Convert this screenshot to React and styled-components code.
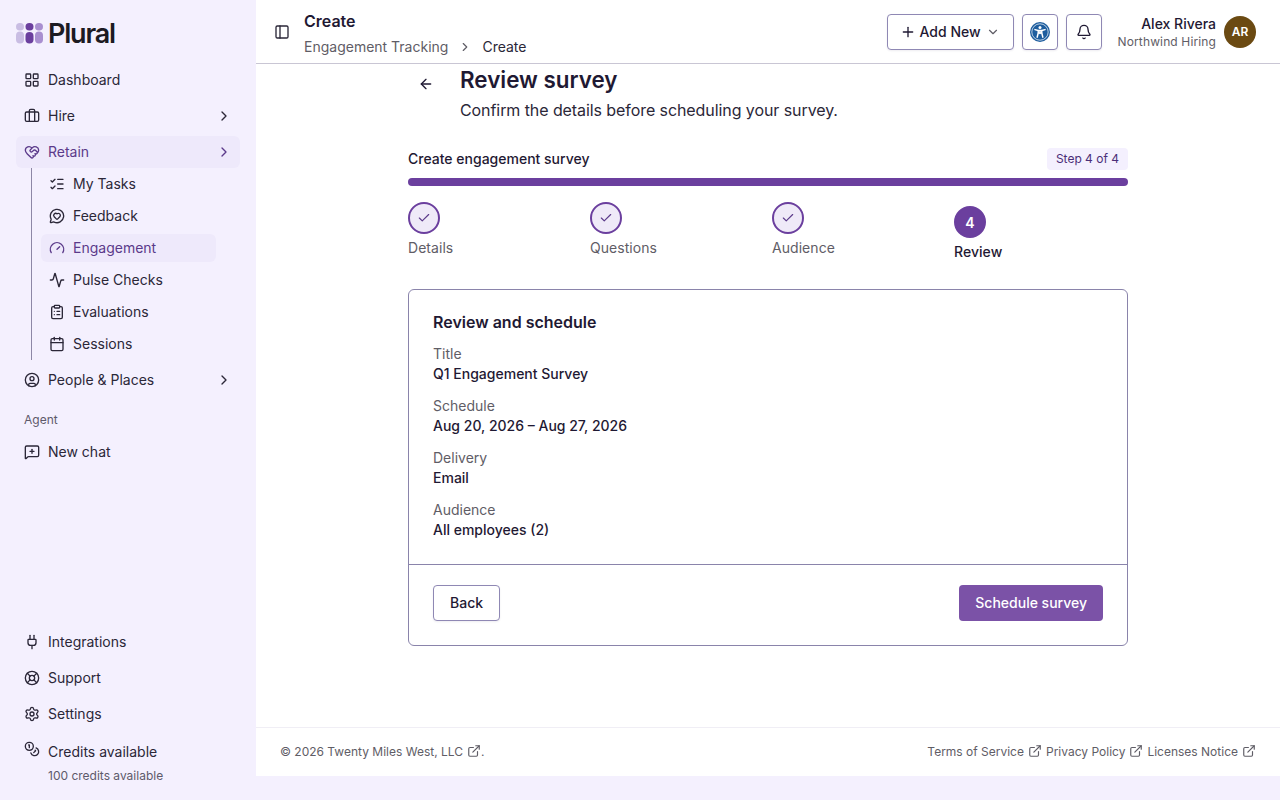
import React from "react";
import styled, { createGlobalStyle } from "styled-components";
import {
  Activity, ArrowLeft, Bell, Briefcase, Calendar, Check, ChevronDown, ChevronRight,
  CircleUser, ClipboardList, Coins, ExternalLink, Gauge, HeartHandshake, LayoutGrid,
  LifeBuoy, ListChecks, MessageCircleHeart, MessageSquarePlus, PanelLeft, Plug, Plus, Settings,
} from "lucide-react";

const GlobalStyle = createGlobalStyle`
  html, body { margin: 0; height: 100%; overflow: hidden; background: #f4f0fe; }
  body { font-family: Inter, "Liberation Sans", sans-serif; color: #1f1933; }
  * { box-sizing: border-box; }
`;

const Shell = styled.div`
  display: grid;
  grid-template-columns: 256px 1fr;
  height: 800px;
`;

const Sidebar = styled.aside`
  display: flex;
  flex-direction: column;
  padding: 0 16px;
  height: 800px;
`;

const LogoRow = styled.div`
  display: flex;
  align-items: center;
  gap: 5px;
  height: 64px;
  padding-top: 2px;
`;

const LogoText = styled.span`
  font-size: 27px;
  font-weight: 600;
  letter-spacing: -1.2px;
  color: #1c1a22;
`;

const NavList = styled.nav`
  display: flex;
  flex-direction: column;
  gap: 4px;
`;

const NavItem = styled.div`
  display: flex;
  align-items: center;
  gap: 8px;
  height: 32px;
  padding: 0 8px;
  border-radius: 6px;
  font-size: 14px;
  line-height: 20px;
  color: ${(p) => (p.$active ? "#5b3a8a" : "#2b2738")};
  background: ${(p) => (p.$active ? "#eee9fb" : "transparent")};
  svg { flex-shrink: 0; }
`;

const NavLabel = styled.span`
  flex: 1;
`;

const SubList = styled.div`
  display: flex;
  flex-direction: column;
  gap: 4px;
  margin-left: 15px;
  padding: 2px 0 2px 9px;
  border-left: 1px solid #8d87a6;
`;

const SubItem = styled(NavItem)`
  height: 28px;
  width: 175px;
`;

const SectionLabel = styled.div`
  font-size: 12px;
  line-height: 16px;
  color: #5e5a6b;
  padding: 16px 8px 8px;
`;

const SidebarBottom = styled.div`
  margin-top: auto;
  padding-bottom: 16px;
`;

const Credits = styled.div`
  padding: 11px 8px 0;
`;

const CreditsTitle = styled.div`
  display: flex;
  align-items: center;
  gap: 8px;
  height: 20px;
  font-size: 14px;
  color: #2b2738;
  svg { margin-top: -5px; }
`;

const CreditsNote = styled.div`
  font-size: 12px;
  line-height: 16px;
  margin: 7px 0 0 24px;
  color: #5e5a6b;
`;

const Main = styled.div`
  display: flex;
  flex-direction: column;
  height: 776px;
  background: #fff;
  overflow: hidden;
`;

const Header = styled.header`
  display: flex;
  align-items: center;
  flex-shrink: 0;
  height: 64px;
  padding: 0 24px 0 18px;
  border-bottom: 1px solid #c9c6d4;
`;

const PanelButton = styled.div`
  display: flex;
  margin-right: 14px;
  color: #2b2738;
`;

const HeaderTitles = styled.div`
  flex: 1;
  display: flex;
  flex-direction: column;
  gap: 6px;
  padding-top: 5px;
`;

const PageName = styled.div`
  font-size: 16px;
  line-height: 20px;
  font-weight: 600;
  color: #1f1933;
`;

const Crumbs = styled.div`
  display: flex;
  align-items: center;
  gap: 10px;
  font-size: 14px;
  line-height: 20px;
  color: #5f5d66;
  svg { color: #5f5d66; }
`;

const CrumbCurrent = styled.span`
  color: #2b2738;
`;

const OutlineButton = styled.button`
  display: flex;
  align-items: center;
  justify-content: center;
  gap: 4px;
  height: 36px;
  padding: ${(p) => (p.$square ? "0" : "0 14px 0 12px")};
  width: ${(p) => (p.$square ? "36px" : "auto")};
  margin-left: ${(p) => (p.$square ? "8px" : "0")};
  background: #fff;
  border: 1px solid #8f88b4;
  border-radius: 4px;
  box-shadow: 0 1px 2px rgba(40, 30, 80, 0.08);
  font: 500 14px Inter, "Liberation Sans", sans-serif;
  color: #1f1933;
`;

const AddButton = styled(OutlineButton)`
  width: 127px;
  padding: 0 13px 0 12px;
  justify-content: flex-start;
`;

const MutedChevron = styled(ChevronDown)`
  margin-left: auto;
  color: #5f5d66;
`;

const UserBlock = styled.div`
  display: flex;
  flex-direction: column;
  align-items: flex-end;
  margin-left: 16px;
`;

const UserName = styled.div`
  font-size: 14px;
  line-height: 20px;
  font-weight: 500;
  color: #1f1933;
`;

const UserOrg = styled.div`
  font-size: 12px;
  line-height: 16px;
  letter-spacing: 0.13px;
  color: #5f5d66;
`;

const Avatar = styled.div`
  display: flex;
  align-items: center;
  justify-content: center;
  width: 32px;
  height: 32px;
  margin-left: 8px;
  border-radius: 50%;
  background: #6b4a12;
  color: #fff;
  font-size: 12px;
  font-weight: 600;
`;

const Content = styled.main`
  flex: 1;
  width: 720px;
  margin: 0 auto;
  overflow: hidden;
`;

const TitleRow = styled.div`
  display: flex;
  align-items: flex-start;
  height: 84px;
`;

const BackArrow = styled.div`
  display: flex;
  justify-content: center;
  width: 36px;
  margin: 12px 16px 0 0;
  color: #1f1933;
`;

const Title = styled.h1`
  margin: 2px 0 0;
  font-size: 22.4px;
  line-height: 28px;
  font-weight: 600;
  color: #1f1933;
`;

const Subtitle = styled.p`
  margin: 4px 0 0;
  font-size: 16px;
  line-height: 24px;
  letter-spacing: -0.08px;
  color: #2b2738;
`;

const ProgressHead = styled.div`
  display: flex;
  align-items: center;
  justify-content: space-between;
  height: 22px;
`;

const ProgressLabel = styled.div`
  margin-top: -2px;
  font-size: 14px;
  font-weight: 500;
  color: #1f1933;
`;

const StepBadge = styled.div`
  padding: 0 9px;
  height: 22px;
  line-height: 22px;
  border-radius: 4px;
  background: #f4f0fe;
  font-size: 12px;
  color: #4b2f78;
`;

const ProgressBar = styled.div`
  height: 8px;
  margin-top: 8px;
  border-radius: 4px;
  background: #6b3f9e;
`;

const Steps = styled.div`
  display: grid;
  grid-template-columns: repeat(4, 1fr);
  gap: 8px;
  margin-top: 16px;
  height: 87px;
`;

const Step = styled.div`
  padding-top: ${(p) => (p.$current ? "4px" : "0")};
`;

const StepCircle = styled.div`
  display: flex;
  align-items: center;
  justify-content: center;
  width: 32px;
  height: 32px;
  border-radius: 50%;
  border: 2px solid #6b3f9e;
  background: ${(p) => (p.$current ? "#6b3f9e" : "#efeaf8")};
  color: ${(p) => (p.$current ? "#fff" : "#5b3a8a")};
  font-size: 14px;
  font-weight: 600;
`;

const StepName = styled.div`
  margin-top: 4px;
  font-size: 14px;
  line-height: 20px;
  letter-spacing: 0.05px;
  font-weight: ${(p) => (p.$current ? 500 : 400)};
  color: ${(p) => (p.$current ? "#1f1933" : "#5f5d66")};
`;

const Card = styled.section`
  border: 1px solid #8a84ab;
  border-radius: 6px;
`;

const CardBody = styled.div`
  padding: 21px 24px 24px;
  height: 274px;
`;

const CardTitle = styled.h2`
  margin: 0 0 11px;
  font-size: 16px;
  line-height: 22px;
  font-weight: 600;
  color: #1f1933;
`;

const Field = styled.div`
  margin-bottom: 12px;
`;

const FieldLabel = styled.div`
  font-size: 14px;
  line-height: 20px;
  color: #5f5d66;
`;

const FieldValue = styled.div`
  font-size: 14px;
  line-height: 20px;
  font-weight: 500;
  color: #1f1933;
`;

const CardFooter = styled.div`
  display: flex;
  justify-content: space-between;
  padding: 20px 24px 24px;
  border-top: 1px solid #8a84ab;
`;

const PrimaryButton = styled.button`
  height: 36px;
  padding: 0 16px 2px;
  border: none;
  border-radius: 4px;
  background: #7b52a7;
  color: #fff;
  font: 500 14px Inter, "Liberation Sans", sans-serif;
`;

const BackButton = styled(OutlineButton)`
  padding: 0 16px;
  padding-bottom: 2px;
`;

const Footer = styled.footer`
  display: flex;
  align-items: center;
  justify-content: space-between;
  flex-shrink: 0;
  height: 49px;
  padding: 0 24px 2px;
  border-top: 1px solid #f0eef5;
  font-size: 12px;
  color: #5f5d66;
`;

const FooterLinks = styled.div`
  display: flex;
  gap: 4px;
`;

const FooterLink = styled.span`
  display: inline-flex;
  align-items: center;
  gap: 4px;
`;

const Copyright = styled.span`
  display: inline-flex;
  align-items: center;
  svg { margin-left: 4px; }
`;

function Logo() {
  return (
    <svg width="27" height="22" viewBox="0 0 27 22">
      <rect x="0" y="1" width="8" height="7.5" rx="3.75" fill="#c9bde3" />
      <rect x="0" y="9.5" width="8" height="12" rx="4" fill="#c9bde3" />
      <rect x="9.5" y="1" width="8" height="7.5" rx="3.75" fill="#6b3f9e" />
      <rect x="9.5" y="10" width="8" height="11.5" rx="4" fill="#6b3f9e" />
      <rect x="19" y="1" width="8" height="7.5" rx="3.75" fill="#a98fd0" />
      <rect x="19" y="9.5" width="8" height="12" rx="4" fill="#a98fd0" />
    </svg>
  );
}

function AccessIcon() {
  return (
    <svg width="20" height="20" viewBox="0 0 20 20">
      <circle cx="10" cy="10" r="10" fill="#1d5d9e" />
      <circle cx="10" cy="10" r="8.2" fill="none" stroke="#fff" strokeWidth="0.7" />
      <circle cx="10" cy="5.5" r="1.5" fill="#fff" />
      <path d="M5 7.6 L8.2 8.5 V11 L7.2 15.2 M15 7.6 L11.8 8.5 V11 L12.8 15.2 M8.2 8.5 H11.8 M8.2 11 H11.8 M10 8.5 V11.6" fill="none" stroke="#fff" strokeWidth="1.5" strokeLinecap="round" strokeLinejoin="round" />
    </svg>
  );
}

const subItems = [
  { label: "My Tasks", Icon: ListChecks },
  { label: "Feedback", Icon: MessageCircleHeart },
  { label: "Engagement", Icon: Gauge, active: true },
  { label: "Pulse Checks", Icon: Activity },
  { label: "Evaluations", Icon: ClipboardList },
  { label: "Sessions", Icon: Calendar },
];

const fields = [
  ["Title", "Q1 Engagement Survey"],
  ["Schedule", "Aug 20, 2026 – Aug 27, 2026"],
  ["Delivery", "Email"],
  ["Audience", "All employees (2)"],
];

export default function App() {
  return (
    <Shell>
      <GlobalStyle />
      <Sidebar>
        <LogoRow>
          <Logo />
          <LogoText>Plural</LogoText>
        </LogoRow>
        <NavList>
          <NavItem><LayoutGrid size={16} /><NavLabel>Dashboard</NavLabel></NavItem>
          <NavItem><Briefcase size={16} /><NavLabel>Hire</NavLabel><ChevronRight size={16} /></NavItem>
          <div>
            <NavItem $active><HeartHandshake size={16} /><NavLabel>Retain</NavLabel><ChevronRight size={16} /></NavItem>
            <SubList>
              {subItems.map(({ label, Icon, active }) => (
                <SubItem key={label} $active={active}><Icon size={16} /><NavLabel>{label}</NavLabel></SubItem>
              ))}
            </SubList>
          </div>
          <NavItem><CircleUser size={16} /><NavLabel>People &amp; Places</NavLabel><ChevronRight size={16} /></NavItem>
        </NavList>
        <SectionLabel>Agent</SectionLabel>
        <NavItem><MessageSquarePlus size={16} /><NavLabel>New chat</NavLabel></NavItem>
        <SidebarBottom>
          <NavList>
            <NavItem><Plug size={16} /><NavLabel>Integrations</NavLabel></NavItem>
            <NavItem><LifeBuoy size={16} /><NavLabel>Support</NavLabel></NavItem>
            <NavItem><Settings size={16} /><NavLabel>Settings</NavLabel></NavItem>
          </NavList>
          <Credits>
            <CreditsTitle><Coins size={16} />Credits available</CreditsTitle>
            <CreditsNote>100 credits available</CreditsNote>
          </Credits>
        </SidebarBottom>
      </Sidebar>

      <Main>
        <Header>
          <PanelButton><PanelLeft size={16} /></PanelButton>
          <HeaderTitles>
            <PageName>Create</PageName>
            <Crumbs>
              Engagement Tracking
              <ChevronRight size={14} />
              <CrumbCurrent>Create</CrumbCurrent>
            </Crumbs>
          </HeaderTitles>
          <AddButton><Plus size={16} />Add New<MutedChevron size={14} /></AddButton>
          <OutlineButton $square><AccessIcon /></OutlineButton>
          <OutlineButton $square><Bell size={16} /></OutlineButton>
          <UserBlock>
            <UserName>Alex Rivera</UserName>
            <UserOrg>Northwind Hiring</UserOrg>
          </UserBlock>
          <Avatar>AR</Avatar>
        </Header>

        <Content>
          <TitleRow>
            <BackArrow><ArrowLeft size={16} /></BackArrow>
            <div>
              <Title>Review survey</Title>
              <Subtitle>Confirm the details before scheduling your survey.</Subtitle>
            </div>
          </TitleRow>

          <ProgressHead>
            <ProgressLabel>Create engagement survey</ProgressLabel>
            <StepBadge>Step 4 of 4</StepBadge>
          </ProgressHead>
          <ProgressBar />
          <Steps>
            {["Details", "Questions", "Audience"].map((name) => (
              <Step key={name}>
                <StepCircle><Check size={14} /></StepCircle>
                <StepName>{name}</StepName>
              </Step>
            ))}
            <Step $current>
              <StepCircle $current>4</StepCircle>
              <StepName $current>Review</StepName>
            </Step>
          </Steps>

          <Card>
            <CardBody>
              <CardTitle>Review and schedule</CardTitle>
              {fields.map(([label, value]) => (
                <Field key={label}>
                  <FieldLabel>{label}</FieldLabel>
                  <FieldValue>{value}</FieldValue>
                </Field>
              ))}
            </CardBody>
            <CardFooter>
              <BackButton>Back</BackButton>
              <PrimaryButton>Schedule survey</PrimaryButton>
            </CardFooter>
          </Card>
        </Content>

        <Footer>
          <Copyright>© 2026 Twenty Miles West, LLC<ExternalLink size={14} />.</Copyright>
          <FooterLinks>
            <FooterLink>Terms of Service <ExternalLink size={14} /></FooterLink>
            <FooterLink>Privacy Policy <ExternalLink size={14} /></FooterLink>
            <FooterLink>Licenses Notice <ExternalLink size={14} /></FooterLink>
          </FooterLinks>
        </Footer>
      </Main>
    </Shell>
  );
}
